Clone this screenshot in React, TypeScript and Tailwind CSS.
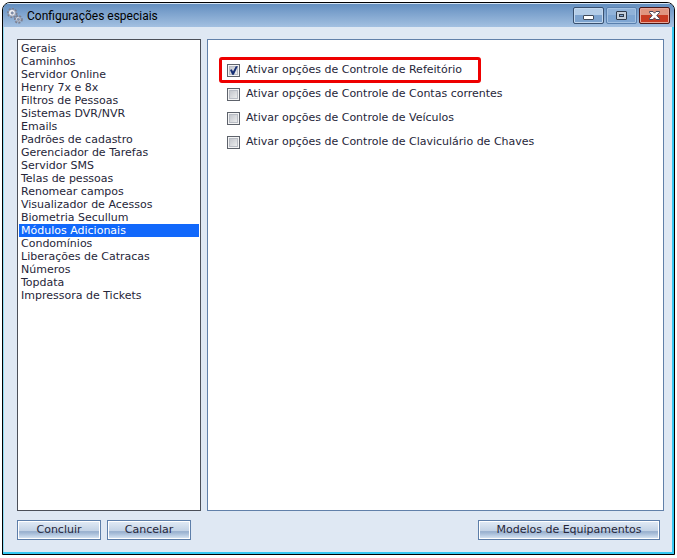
import { useState } from "react";
import clsx from "clsx";

const sections = [
  "Gerais",
  "Caminhos",
  "Servidor Online",
  "Henry 7x e 8x",
  "Filtros de Pessoas",
  "Sistemas DVR/NVR",
  "Emails",
  "Padrões de cadastro",
  "Gerenciador de Tarefas",
  "Servidor SMS",
  "Telas de pessoas",
  "Renomear campos",
  "Visualizador de Acessos",
  "Biometria Secullum",
  "Módulos Adicionais",
  "Condomínios",
  "Liberações de Catracas",
  "Números",
  "Topdata",
  "Impressora de Tickets",
];

const modules = [
  { id: "refeitorio", label: "Ativar opções de Controle de Refeitório", enabled: true, highlighted: true },
  { id: "contas", label: "Ativar opções de Controle de Contas correntes", enabled: false, highlighted: false },
  { id: "veiculos", label: "Ativar opções de Controle de Veículos", enabled: false, highlighted: false },
  { id: "claviculario", label: "Ativar opções de Controle de Claviculário de Chaves", enabled: false, highlighted: false },
];

const Gear = ({ x, y, r }: { x: number; y: number; r: number }) => (
  <g transform={`translate(${x} ${y})`}>
    <circle r={r + 0.2} fill="none" stroke="#7b7f90" strokeWidth="2.4" strokeDasharray="1.8 1.3" />
    <circle r={r - 0.6} fill="#d5d8e2" stroke="#9a9fae" strokeWidth="0.8" />
    <circle cx="-0.4" cy="-0.5" r={r - 1.3} fill="#f3f4f9" />
    <circle r="1.2" fill="#7c93b8" stroke="#777c8d" strokeWidth="0.6" />
  </g>
);

const GearsIcon = () => (
  <svg viewBox="0 0 16 16" className="size-4" aria-hidden="true">
    <Gear x={5.2} y={5} r={3.9} />
    <Gear x={11.4} y={11.4} r={3} />
  </svg>
);

const WindowButton = ({ kind }: { kind: "minimize" | "maximize" | "close" }) => {
  const labels = { minimize: "Minimizar", maximize: "Maximizar", close: "Fechar" };

  return (
    <button
      type="button"
      aria-label={labels[kind]}
      className={clsx(
        "flex h-[17px] w-[31px] items-center justify-center rounded-xs border",
        kind === "minimize" &&
          "border-[#39506f] bg-linear-to-b from-[#b4cde8] from-50% to-[#7da3cf] to-50% shadow-[inset_0_0_0_1px_#c3d8ef]",
        kind === "maximize" &&
          "border-[#5a80ae] bg-linear-to-b from-[#90b2d9] from-50% to-[#7ea5d2] to-50% shadow-[inset_0_0_0_1px_#a4c2e3]",
        kind === "close" &&
          "border-[#4a1717] bg-linear-to-b from-[#e09580] from-50% to-[#c83b22] to-50% shadow-[inset_0_0_0_1px_#e8a799]",
      )}
    >
      <svg viewBox="0 0 13 11" className="h-[11px] w-[13px]" aria-hidden="true">
        {kind === "minimize" && (
          <rect x="1.5" y="5.5" width="10" height="4" rx="0.5" fill="#fff" stroke="#414b5a" />
        )}
        {kind === "maximize" && (
          <>
            <rect x="1.5" y="1.5" width="10" height="8" rx="0.5" fill="#c5cfdb" stroke="#303b4c" />
            <rect x="4.5" y="4.5" width="4" height="2" fill="#7fa5d1" stroke="#303b4c" />
          </>
        )}
        {kind === "close" && (
          <path
            d="M1.5 1.5H5L6.5 3.2L8 1.5H11.5V2.5L8.8 5.5L11.5 8.5V9.5H8L6.5 7.8L5 9.5H1.5V8.5L4.2 5.5L1.5 2.5Z"
            fill="#fff"
            stroke="#47455a"
          />
        )}
      </svg>
    </button>
  );
};

const ActionButton = ({ label, wide = false }: { label: string; wide?: boolean }) => (
  <button
    type="button"
    className={clsx(
      "flex h-5 items-center justify-center border border-[#5d7ea9] bg-white p-px",
      wide ? "w-[182px]" : "w-[84px]",
    )}
  >
    <span className="flex h-4 w-full items-center justify-center bg-[linear-gradient(to_bottom,#dfe9f4,#c3d3e6_55%,#96aecd_60%,#b3c7df_80%,#d3e1f0)]">
      {label}
    </span>
  </button>
);

const App = () => {
  const [selected, setSelected] = useState("Módulos Adicionais");
  const [enabled, setEnabled] = useState<string[]>(modules.filter((item) => item.enabled).map((item) => item.id));

  const toggle = (id: string) => {
    setEnabled((current) => (current.includes(id) ? current.filter((item) => item !== id) : [...current, id]));
  };

  return (
    <div className="flex min-h-screen flex-col bg-white px-0.5 pt-0.5 pb-[3px] font-['DejaVu_Sans',sans-serif] text-[11px] text-[#262639]">
      <main className="flex flex-1 flex-col overflow-hidden rounded-t-lg border border-black bg-[#dfe8f3] shadow-[inset_-2px_-2px_0_#35c8f2,inset_1px_0_0_#8edcf5]">
        <header className="flex h-6 items-center justify-between border-t border-[#d5e5f5] bg-linear-to-b from-[#648fc0] to-[#a3c0e1] pr-1 pl-1">
          <div className="flex items-center gap-1">
            <GearsIcon />
            <h1 className="font-[Roboto,sans-serif] text-[12px] text-black">Configurações especiais</h1>
          </div>
          <div className="flex gap-0.5">
            <WindowButton kind="minimize" />
            <WindowButton kind="maximize" />
            <WindowButton kind="close" />
          </div>
        </header>

        <div className="flex flex-1 gap-1.5 pt-3 pr-[10px] pl-[14px]">
          <nav
            aria-label="Configurações"
            className="w-[184px] shrink-0 border border-[#4b4f58] bg-white px-px pt-0.5"
          >
            <ul>
              {sections.map((section) => (
                <li key={section}>
                  <button
                    type="button"
                    aria-current={section === selected ? "page" : undefined}
                    onClick={() => setSelected(section)}
                    className={clsx(
                      "block h-[13px] w-full px-0.5 text-left leading-[13px] whitespace-nowrap",
                      section === selected && "bg-[#1168fb] text-white",
                    )}
                  >
                    {section}
                  </button>
                </li>
              ))}
            </ul>
          </nav>

          <section aria-label={selected} className="min-w-0 flex-1 border border-[#6180a9] bg-white px-3 pt-[18px]">
            {modules.map((item) => (
              <div
                key={item.id}
                className={clsx(
                  "flex h-6 w-fit items-center pr-[18px] pl-[7px]",
                  item.highlighted && "rounded-xs outline-3 -outline-offset-2 outline-[#ee0000]",
                )}
              >
                <input
                  id={item.id}
                  type="checkbox"
                  checked={enabled.includes(item.id)}
                  onChange={() => toggle(item.id)}
                  className="peer size-[13px] shrink-0 appearance-none border border-[#5d626b] bg-linear-to-br from-[#b9bdc4] to-[#f6f6f6] shadow-[inset_0_0_0_1px_#f4f4f4,inset_0_0_0_2px_#b9bdc5]"
                />
                <svg
                  viewBox="0 0 13 13"
                  className="pointer-events-none invisible -ml-[13px] size-[13px] shrink-0 peer-checked:visible"
                  aria-hidden="true"
                >
                  <path d="M3 6L4.8 5.2L6 7.4L8.8 2.2H10.8L6.8 10.8H5.2Z" fill="#162f74" />
                </svg>
                <label htmlFor={item.id} className="pl-1.5 whitespace-nowrap">
                  {item.label}
                </label>
              </div>
            ))}
          </section>
        </div>

        <footer className="flex justify-between pt-[9px] pr-[14px] pb-[14px] pl-[14px]">
          <div className="flex gap-1.5">
            <ActionButton label="Concluir" />
            <ActionButton label="Cancelar" />
          </div>
          <ActionButton label="Modelos de Equipamentos" wide />
        </footer>
      </main>
    </div>
  );
};

export default App;
